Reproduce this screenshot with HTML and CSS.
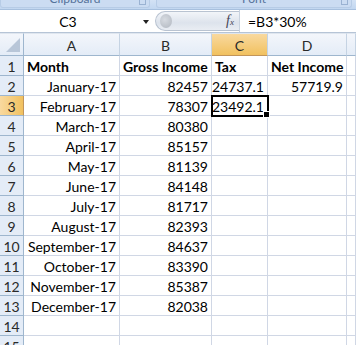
FILE: index.html
```html
<!DOCTYPE html>
<html lang="en">
<head>
    <meta charset="UTF-8">
    <title>Sheet - Tax</title>
    <link rel="stylesheet" href="styles.css">
</head>
<body>
    <div class="ribbon">
        <div class="group group-clip"><span>Clipboard</span><i class="launch"></i></div>
        <div class="group group-font"><span>Font</span><i class="launch"></i></div>
    </div>

    <div class="formula-bar">
        <div class="name-box">
            <span class="name">C3</span>
            <span class="arrow"></span>
        </div>
        <div class="fx-area">
            <span class="knob"></span>
            <span class="fx"><i>f</i><small>x</small></span>
        </div>
        <div class="formula">=B3*30%</div>
    </div>

    <div class="sheet">
        <div class="corner"><span class="tri"></span></div>
        <div class="col-head">A</div>
        <div class="col-head">B</div>
        <div class="col-head sel">C</div>
        <div class="col-head">D</div>
        <div class="col-head last"></div>

        <div class="row-head">1</div>
        <div class="cell bold">Month</div>
        <div class="cell bold">Gross Income</div>
        <div class="cell bold">Tax</div>
        <div class="cell bold">Net Income</div>
        <div class="cell"></div>

        <div class="row-head">2</div>
        <div class="cell num">January-17</div>
        <div class="cell num">82457</div>
        <div class="cell num">24737.1</div>
        <div class="cell num">57719.9</div>
        <div class="cell"></div>

        <div class="row-head sel">3</div>
        <div class="cell num">February-17</div>
        <div class="cell num">78307</div>
        <div class="cell num active">23492.1<span class="handle"></span></div>
        <div class="cell"></div>
        <div class="cell"></div>

        <div class="row-head">4</div>
        <div class="cell num">March-17</div>
        <div class="cell num">80380</div>
        <div class="cell"></div><div class="cell"></div><div class="cell"></div>

        <div class="row-head">5</div>
        <div class="cell num">April-17</div>
        <div class="cell num">85157</div>
        <div class="cell"></div><div class="cell"></div><div class="cell"></div>

        <div class="row-head">6</div>
        <div class="cell num">May-17</div>
        <div class="cell num">81139</div>
        <div class="cell"></div><div class="cell"></div><div class="cell"></div>

        <div class="row-head">7</div>
        <div class="cell num">June-17</div>
        <div class="cell num">84148</div>
        <div class="cell"></div><div class="cell"></div><div class="cell"></div>

        <div class="row-head">8</div>
        <div class="cell num">July-17</div>
        <div class="cell num">81717</div>
        <div class="cell"></div><div class="cell"></div><div class="cell"></div>

        <div class="row-head">9</div>
        <div class="cell num">August-17</div>
        <div class="cell num">82393</div>
        <div class="cell"></div><div class="cell"></div><div class="cell"></div>

        <div class="row-head">10</div>
        <div class="cell num">September-17</div>
        <div class="cell num">84637</div>
        <div class="cell"></div><div class="cell"></div><div class="cell"></div>

        <div class="row-head">11</div>
        <div class="cell num">October-17</div>
        <div class="cell num">83390</div>
        <div class="cell"></div><div class="cell"></div><div class="cell"></div>

        <div class="row-head">12</div>
        <div class="cell num">November-17</div>
        <div class="cell num">85387</div>
        <div class="cell"></div><div class="cell"></div><div class="cell"></div>

        <div class="row-head">13</div>
        <div class="cell num">December-17</div>
        <div class="cell num">82038</div>
        <div class="cell"></div><div class="cell"></div><div class="cell"></div>

        <div class="row-head">14</div>
        <div class="cell"></div><div class="cell"></div><div class="cell"></div><div class="cell"></div><div class="cell"></div>

        <div class="row-head">15</div>
        <div class="cell"></div><div class="cell"></div><div class="cell"></div><div class="cell"></div><div class="cell"></div>
    </div>
</body>
</html>
```

FILE: styles.css
```css
body {
    margin: 0;
    padding: 0;
    width: 356px;
    height: 345px;
    overflow: hidden;
    background-color: #fff;
    font-family: 'Lato', 'Liberation Sans', sans-serif;
    font-size: 14px;
    color: #000;
}

/* ribbon strip cut off at the top */
.ribbon {
    height: 9px;
    background: linear-gradient(#d3e2f5, #c2d7f0);
    border-bottom: 1px solid #a7c0de;
    display: flex;
    gap: 6px;
    padding: 0 4px 0 0;
    overflow: hidden;
}
.group {
    height: 7px;
    background: #cbdcf2;
    border: 1px solid #b7cce6;
    border-top: none;
    border-radius: 0 0 3px 3px;
    position: relative;
    text-align: center;
    overflow: hidden;
}
.group span {
    display: block;
    margin-top: -9px;
    font-size: 12px;
    color: #55729a;
}
.group-clip { width: 148px; }
.group-font { flex: 1; }
.launch {
    position: absolute;
    right: 3px;
    top: 0;
    width: 5px;
    height: 4px;
    border: 1px solid #9ab2d2;
    border-top: none;
}

/* formula bar */
.formula-bar {
    height: 22px;
    display: flex;
    border-bottom: 1px solid #b6c4d6;
    background: #fff;
    font-size: 14px;
}
.name-box {
    width: 155px;
    display: flex;
    align-items: center;
    position: relative;
}
.name {
    flex: 1;
    text-align: center;
    padding-right: 19px;
}
.arrow {
    position: absolute;
    left: 143px;
    top: 10px;
    border-left: 3px solid transparent;
    border-right: 3px solid transparent;
    border-top: 4px solid #222;
}
.fx-area {
    width: 84px;
    margin: 1px 0;
    border-radius: 11px 0 0 11px;
    background: linear-gradient(#f2f5f9, #dde3ec 60%, #e9edf3);
    border: 1px solid #b9c3d1;
    border-right: none;
    display: flex;
    align-items: center;
    justify-content: space-between;
    padding: 0 5px 0 4px;
    box-sizing: border-box;
}
.knob {
    width: 12px;
    height: 14px;
    border-radius: 50%;
    background: radial-gradient(circle at 40% 40%, #d7dbe1, #b0b6bf);
}
.fx {
    color: #445;
    font-family: 'Liberation Serif', serif;
    font-size: 14px;
}
.fx small { font-size: 9px; font-style: italic; }
.formula {
    flex: 1;
    border-left: 1px solid #c8d2df;
    padding-left: 8px;
    display: flex;
    align-items: center;
}

/* grid */
.sheet {
    display: grid;
    grid-template-columns: 24px 96px 92px 56px 79px 1fr;
    grid-template-rows: 23px repeat(15, 20px);
    background: #fff;
}
.corner, .col-head, .row-head {
    background: linear-gradient(#f3f6fb, #e4ecf7);
    border-right: 1px solid #9eb6ce;
    border-bottom: 1px solid #9eb6ce;
    box-sizing: border-box;
    color: #2a2a2a;
    display: flex;
    align-items: center;
    justify-content: center;
}
.col-head { border-right-color: #c5d3e3; padding-top: 2px; }
.col-head.sel {
    background: linear-gradient(#f9d99f, #f1c15f);
    border-bottom-color: #c2955a;
}
.corner {
    justify-content: flex-end;
    align-items: flex-end;
    padding: 0 3px 3px 0;
    border-top: 1px solid #dfe6ef;
}
.col-head { border-top: 1px solid #dfe6ef; }
.tri {
    width: 0;
    height: 0;
    border-left: 14px solid transparent;
    border-bottom: 14px solid #b8c6d8;
}
.row-head {
    background: #e4ecf7;
    border-bottom-color: #9eb6ce;
    padding-top: 1px;
}
.row-head.sel {
    background: linear-gradient(90deg, #f9d99f, #f1c15f);
    border-right-color: #c2955a;
}
.cell {
    border-right: 1px solid #d0d7e5;
    border-bottom: 1px solid #d0d7e5;
    box-sizing: border-box;
    padding: 1px 3px 0 3px;
    display: flex;
    align-items: center;
    white-space: nowrap;
    overflow: visible;
    position: relative;
}
.cell.num { justify-content: flex-end; }
.cell.bold { font-weight: bold; }
.cell.active {
    outline: 2px solid #000;
    outline-offset: -1px;
    z-index: 2;
}
.handle {
    position: absolute;
    right: -3px;
    bottom: -3px;
    width: 5px;
    height: 5px;
    background: #000;
    border: 1px solid #fff;
}
```
